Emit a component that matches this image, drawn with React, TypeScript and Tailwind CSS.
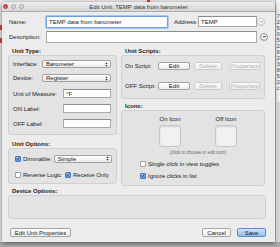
import React from 'react';

// petites briques façon Aqua
const Checkbox = ({ checked }: { checked?: boolean }) =>
  checked ? (
    <span className="flex h-[6px] w-[6px] shrink-0 items-center justify-center rounded-[1px] border border-[#3f79c4] bg-gradient-to-b from-[#a9cdf5] to-[#4f8fdb]">
      <svg viewBox="0 0 8 8" className="-mt-[1px] h-[7px] w-[7px]">
        <path d="M1.2 3.8 L3.2 6.2 L7.2 0.8" stroke="#1b1b1b" strokeWidth="1.4" fill="none" />
      </svg>
    </span>
  ) : (
    <span className="h-[6px] w-[6px] shrink-0 rounded-[1px] border border-[#9d9d9d] bg-white" />
  );

const Select = ({ value, className = '' }: { value: string; className?: string }) => (
  <div
    className={`flex h-[8px] items-center justify-between rounded-[2px] border border-[#9f9f9f] bg-gradient-to-b from-white to-[#eaeaea] pl-[3px] pr-[2px] ${className}`}
  >
    <span>{value}</span>
    <svg viewBox="0 0 4 7" className="h-[5px] w-[3px]">
      <path d="M2 0.5 L3.6 2.7 H0.4Z M2 6.5 L3.6 4.3 H0.4Z" fill="#333" />
    </svg>
  </div>
);

const Field = ({ value = '', className = '' }: { value?: string; className?: string }) => (
  <div className={`flex h-[9px] items-center border border-[#a9a9a9] border-t-[#8e8e8e] bg-white pl-[2px] ${className}`}>
    {value}
  </div>
);

const Btn = ({
  children,
  disabled,
  primary,
  className = '',
}: {
  children: React.ReactNode;
  disabled?: boolean;
  primary?: boolean;
  className?: string;
}) => {
  const look = primary
    ? 'border-[#5a8ccf] bg-gradient-to-b from-[#d3e6fb] to-[#8fbaec] text-[#111]'
    : disabled
      ? 'border-[#cdcdcd] bg-gradient-to-b from-[#fafafa] to-[#eeeeee] text-[#b3b3b3]'
      : 'border-[#a3a3a3] bg-gradient-to-b from-white to-[#ececec] text-[#222]';
  return (
    <div className={`flex h-[8px] items-center justify-center rounded-[2px] border ${look} ${className}`}>
      {children}
    </div>
  );
};

const Circle = ({ disabled }: { disabled?: boolean }) => (
  <div
    className={`flex h-[8px] w-[8px] shrink-0 items-center justify-center rounded-full border bg-gradient-to-b from-white to-[#e3e3e3] ${
      disabled ? 'border-[#c4c4c4]' : 'border-[#8f8f8f]'
    }`}
  >
    <span className={`h-[1px] w-[3px] ${disabled ? 'bg-[#c0c0c0]' : 'bg-[#555]'}`} />
  </div>
);

const Group = ({ className = '', children }: { className?: string; children?: React.ReactNode }) => (
  <div className={`rounded-[3px] border border-[#d0d0d0] bg-[#e3e3e3] ${className}`}>{children}</div>
);

const Header = ({ children, className = '' }: { children: React.ReactNode; className?: string }) => (
  <div className={`flex h-[9px] items-center pl-[4px] font-bold text-[#222] ${className}`}>{children}</div>
);

const BG_LINES = ['7.', '2.', '5.', '0', '5.', '2.', '6.', '2.', '3.', '8.', '5.', '2.', 'c.'];

export default function App() {
  return (
    <div className="relative h-[247px] w-[280px] overflow-hidden bg-[#e9e9e9] font-['Liberation_Sans',Arial,sans-serif] text-[6px] leading-none text-[#222]">
      {/* fenêtre derrière */}
      <div className="absolute left-[147px] top-0 h-[2px] w-[3px] bg-[#d33]" />
      <div className="absolute left-0 top-[25px] h-[5px] w-[2px] bg-[#d44]" />
      <div className="absolute left-0 top-[38px] h-[5px] w-[2px] bg-[#d44]" />
      <div className="absolute right-0 top-0 flex h-[247px] w-[5px] flex-col border-l border-[#b9b9b9] bg-[#f3f3f3] pl-[1px] pt-[14px] text-[5px] text-[#333]">
        {BG_LINES.map((t, i) => (
          <div key={i} className="h-[6px]">
            {t}
          </div>
        ))}
        <div className="mt-[10px] flex-1 bg-[#d8d8d8]" />
      </div>
      <div className="absolute bottom-0 left-0 h-[5px] w-[280px] bg-[#a9a9a9]" />

      {/* dialogue */}
      <div className="absolute left-[2px] top-[2px] flex h-[240px] w-[273px] flex-col rounded-t-[4px] bg-[#ececec] shadow-[0_1px_4px_rgba(0,0,0,0.55)]">
        <div className="relative flex h-[10px] shrink-0 items-center justify-center rounded-t-[4px] border-b border-[#adadad] bg-gradient-to-b from-[#eeeeee] to-[#d4d4d4] text-[#333]">
          <div className="absolute left-[1px] top-[2px] flex gap-[3px]">
            <span className="h-[5px] w-[5px] rounded-full border border-[#b5362f] bg-[#e9584f]" />
            <span className="h-[5px] w-[5px] rounded-full border border-[#a5a5a5] bg-[#dcdcdc]" />
            <span className="h-[5px] w-[5px] rounded-full border border-[#a5a5a5] bg-[#dcdcdc]" />
          </div>
          <span>Edit Unit: TEMP data from barometer</span>
        </div>

        <div className="flex flex-col pl-[6px] pr-[4px]">
          {/* Name / Address */}
          <div className="mt-[3px] flex h-[13px] items-center">
            <span className="w-[38px] pl-[1px]">Name:</span>
            <div className="flex h-[12px] w-[122px] items-center rounded-[1px] border border-[#6f9fda] bg-white pl-[2px] shadow-[0_0_0_1px_#a8c8f0]">
              TEMP data from barometer
            </div>
            <span className="ml-[6px] w-[24px]">Address:</span>
            <Field value="TEMP" className="h-[11px] w-[59px]" />
            <Circle disabled />
          </div>
          {/* Description */}
          <div className="mt-[2px] flex h-[13px] items-center">
            <span className="w-[38px] pl-[1px]">Description:</span>
            <Field className="h-[12px] w-[211px]" />
            <div className="ml-[3px]">
              <Circle />
            </div>
          </div>

          <div className="mt-[3px] flex gap-[4px]">
            {/* colonne gauche */}
            <div className="flex w-[109px] flex-col">
              <Header>Unit Type:</Header>
              <Group className="flex h-[80px] flex-col pl-[4px] pr-[5px] pt-[4px]">
                <div className="flex h-[8px] items-center">
                  <span className="w-[29px]">Interface:</span>
                  <Select value="Barometer" className="flex-1" />
                </div>
                <div className="mt-[6px] flex h-[8px] items-center">
                  <span className="w-[29px]">Device:</span>
                  <Select value="Register" className="flex-1" />
                </div>
                <div className="mt-[7px] flex h-[9px] items-center">
                  <span className="w-[50px]">Unit of Measure:</span>
                  <Field value="°F" className="flex-1" />
                </div>
                <div className="mt-[6px] flex h-[9px] items-center">
                  <span className="w-[50px]">ON Label:</span>
                  <Field className="flex-1" />
                </div>
                <div className="mt-[6px] flex h-[9px] items-center">
                  <span className="w-[50px]">OFF Label:</span>
                  <Field className="flex-1" />
                </div>
              </Group>

              <Header className="mt-[4px]">Unit Options:</Header>
              <Group className="flex h-[36px] flex-col pl-[6px] pr-[4px] pt-[5px]">
                <div className="flex h-[9px] items-center gap-[2px]">
                  <Checkbox checked />
                  <span>Dimmable:</span>
                  <Select value="Simple" className="ml-auto w-[59px]" />
                </div>
                <div className="mt-[7px] flex h-[9px] items-center gap-[2px]">
                  <Checkbox />
                  <span className="w-[40px]">Reverse Logic</span>
                  <Checkbox checked />
                  <span>Receive Only</span>
                </div>
              </Group>
            </div>

            {/* colonne droite */}
            <div className="flex w-[144px] flex-col">
              <Header>Unit Scripts:</Header>
              <Group className="flex h-[44px] flex-col pl-[3px] pt-[6px]">
                <div className="flex h-[8px] items-center">
                  <span className="w-[33px]">On Script:</span>
                  <Btn className="w-[32px]">Edit</Btn>
                  <Btn disabled className="ml-[4px] w-[28px]">Delete</Btn>
                  <Btn disabled className="ml-[7px] w-[31px]">Properties</Btn>
                </div>
                <div className="mt-[12px] flex h-[8px] items-center">
                  <span className="w-[33px]">OFF Script:</span>
                  <Btn className="w-[32px]">Edit</Btn>
                  <Btn disabled className="ml-[4px] w-[28px]">Delete</Btn>
                  <Btn disabled className="ml-[7px] w-[31px]">Properties</Btn>
                </div>
              </Group>

              <Header className="mt-[2px]">Icons:</Header>
              <Group className="flex h-[76px] flex-col pt-[4px]">
                <div className="ml-[37px] flex w-[78px] flex-col">
                  <div className="flex justify-between">
                    {['On Icon', 'Off Icon'].map((l) => (
                      <div key={l} className="flex w-[22px] flex-col items-center">
                        <span className="flex h-[8px] items-center whitespace-nowrap">{l}</span>
                        <div className="mt-[2px] h-[22px] w-[22px] rounded-[3px] border border-[#c6c6c6] bg-[#f1f1f1] shadow-[inset_0_1px_2px_rgba(0,0,0,0.12)]" />
                      </div>
                    ))}
                  </div>
                  <span className="mt-[2px] flex h-[8px] items-center justify-center whitespace-nowrap text-[4.5px] text-[#666]">
                    (click to choose or edit icon)
                  </span>
                </div>
                <div className="ml-[18px] mt-[2px] flex h-[9px] items-center gap-[2px]">
                  <Checkbox />
                  <span>Single click in view toggles</span>
                </div>
                <div className="ml-[18px] mt-[3px] flex h-[9px] items-center gap-[2px]">
                  <Checkbox checked />
                  <span>Ignore clicks in list</span>
                </div>
              </Group>
            </div>
          </div>

          <Header>Device Options:</Header>
          <Group className="h-[24px] w-[258px]" />

          <div className="mt-[9px] flex h-[9px] w-[258px] items-center">
            <Btn className="ml-[2px] h-[9px] w-[61px]">Edit Unit Properties</Btn>
            <Btn className="ml-auto h-[9px] w-[29px]">Cancel</Btn>
            <Btn primary className="ml-[6px] h-[9px] w-[29px]">
              Save
            </Btn>
          </div>
        </div>
      </div>
    </div>
  );
}
